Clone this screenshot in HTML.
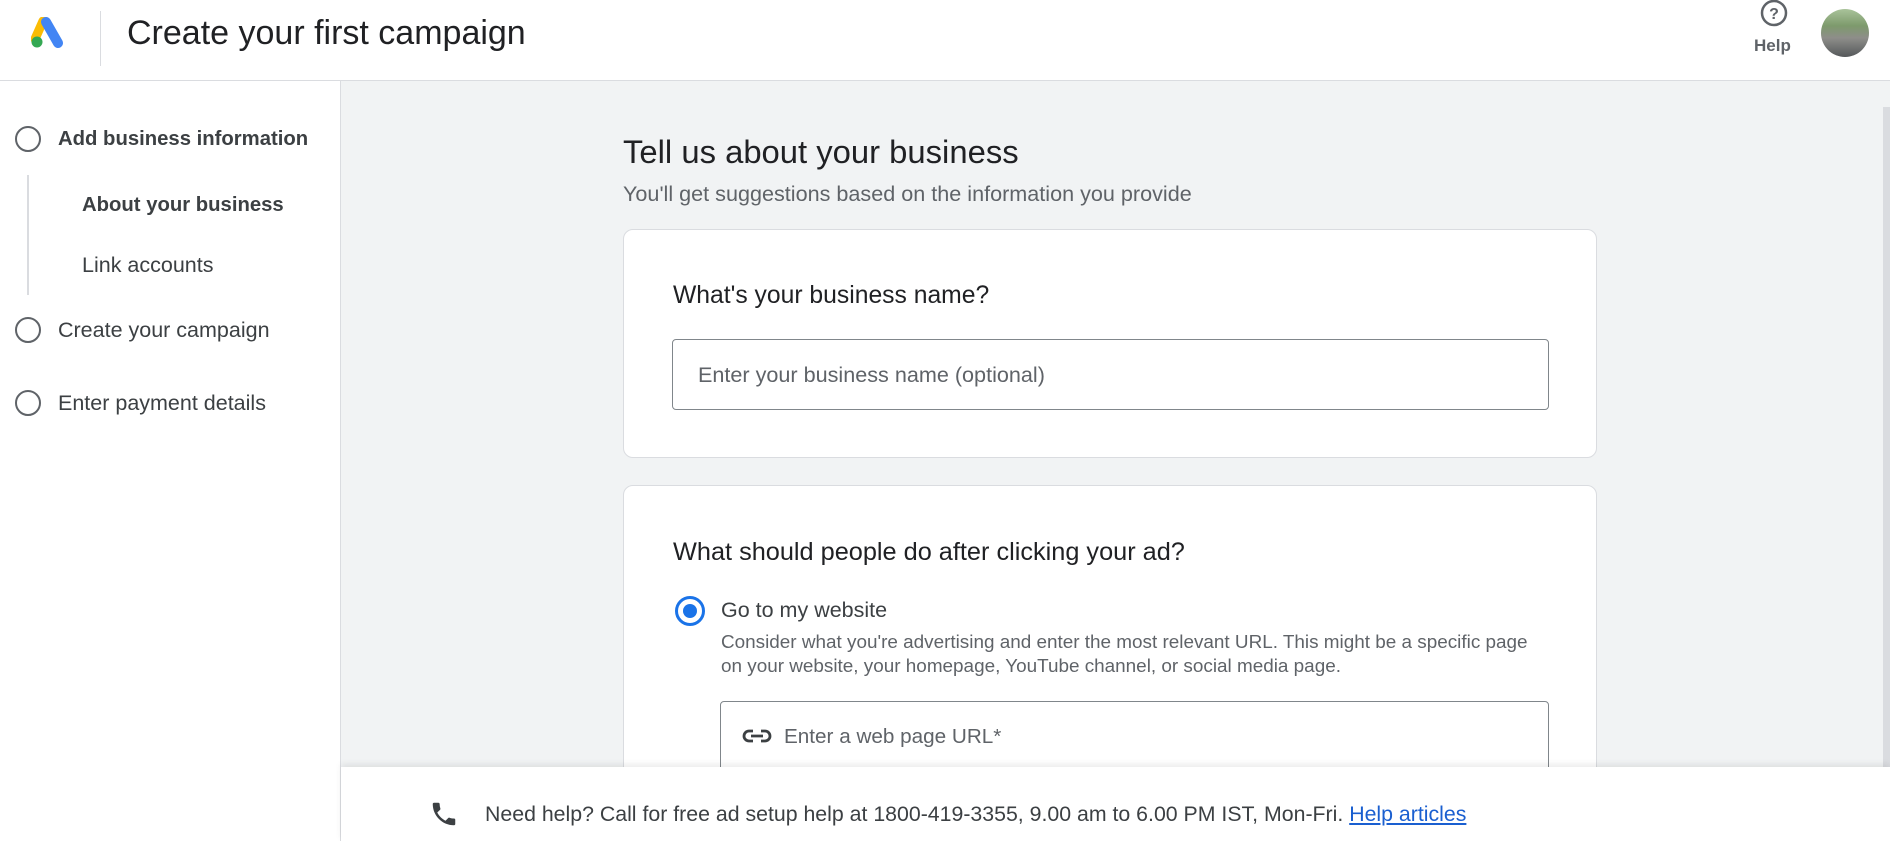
<!DOCTYPE html>
<html><head><style>
*{margin:0;padding:0;box-sizing:border-box}
html,body{width:1890px;height:841px;overflow:hidden}
body{font-family:"Liberation Sans",Roboto,sans-serif;background:#f1f3f4;position:relative;color:#3c4043}
.hdr{position:absolute;left:0;top:0;width:1890px;height:81px;background:#fff;border-bottom:1px solid #dadce0}
.side{position:absolute;left:0;top:81px;width:341px;height:760px;background:#fff;border-right:1px solid #dadce0}
.abs{position:absolute;white-space:nowrap}
.circ{position:absolute;width:26px;height:26px;border:2.5px solid #5f6368;border-radius:50%}
.card{position:absolute;background:#fff;border:1px solid #dadce0;border-radius:10px;overflow:hidden}
.inp{position:absolute;border:1px solid #80868b;border-radius:4px;background:#fff}
</style></head><body>
<div class="hdr">
<svg class="abs" style="left:31px;top:17px" width="34" height="32" viewBox="0 0 34 32">
<path d="M12 4 L4 22" stroke="#fbbc04" stroke-width="9" stroke-linecap="round"/>
<path d="M15 5 L27 26" stroke="#4285f4" stroke-width="10" stroke-linecap="round"/>
<circle cx="6" cy="25" r="5.5" fill="#34a853"/>
</svg>
<div class="abs" style="left:100px;top:11px;width:1px;height:55px;background:#dadce0"></div>
<div class="abs" style="left:127px;top:14px;font-size:34px;color:#202124">Create your first campaign</div>
<svg class="abs" style="left:1760px;top:0px" width="28" height="28" viewBox="0 0 28 28"><circle cx="14" cy="13" r="12" fill="none" stroke="#5f6368" stroke-width="2.5"/><text x="14" y="19" font-size="16" font-weight="bold" text-anchor="middle" fill="#5f6368" font-family="Liberation Sans">?</text></svg>
<div class="abs" style="left:1754px;top:36px;font-size:17px;font-weight:bold;color:#5f6368">Help</div>
<div class="abs" style="left:1821px;top:9px;width:48px;height:48px;border-radius:50%;background:linear-gradient(180deg,#a9c39a 0%,#7d9a6c 35%,#8e8e8a 60%,#55585a 100%)"></div>
</div>
<div class="side">
<div class="circ" style="left:15px;top:45px"></div>
<div class="abs" style="left:58px;top:47px;font-size:20.3px;font-weight:bold;color:#3c4043">Add business information</div>
<div class="abs" style="left:27px;top:94px;width:1.5px;height:120px;background:#dadce0"></div>
<div class="abs" style="left:82px;top:113px;font-size:20.3px;font-weight:bold;color:#3c4043">About your business</div>
<div class="abs" style="left:82px;top:172px;font-size:21.5px;color:#3c4043">Link accounts</div>
<div class="circ" style="left:15px;top:236px"></div>
<div class="abs" style="left:58px;top:237px;font-size:21.5px;color:#3c4043">Create your campaign</div>
<div class="circ" style="left:15px;top:309px"></div>
<div class="abs" style="left:58px;top:310px;font-size:21.5px;color:#3c4043">Enter payment details</div>
</div>
<div class="abs" style="left:623px;top:133px;font-size:32.8px;color:#202124">Tell us about your business</div>
<div class="abs" style="left:623px;top:181px;font-size:21.6px;color:#5f6368">You'll get suggestions based on the information you provide</div>
<div class="card" style="left:623px;top:229px;width:974px;height:229px">
<div class="abs" style="left:49px;top:52px;font-size:24.7px;color:#202124">What's your business name?</div>
<div class="inp" style="left:48px;top:109px;width:877px;height:71px"><div class="abs" style="left:25px;top:22px;font-size:21.6px;color:#5f6368">Enter your business name (optional)</div></div>
</div>
<div class="card" style="left:623px;top:485px;width:974px;height:380px">
<div class="abs" style="left:49px;top:52px;font-size:25.3px;color:#202124">What should people do after clicking your ad?</div>
<div class="abs" style="left:51px;top:110px;width:30px;height:30px;border:3px solid #1a73e8;border-radius:50%"><div style="position:absolute;left:5px;top:5px;width:14px;height:14px;border-radius:50%;background:#1a73e8"></div></div>
<div class="abs" style="left:97px;top:112px;font-size:21.5px;color:#3c4043">Go to my website</div>
<div class="abs" style="left:97px;top:145px;font-size:18.9px;line-height:24px;color:#5f6368">Consider what you're advertising and enter the most relevant URL. This might be a specific page<br>on your website, your homepage, YouTube channel, or social media page.</div>
<div class="inp" style="left:96px;top:215px;width:829px;height:90px">
<svg class="abs" style="left:20px;top:26px" width="32" height="16" viewBox="0 0 32 16"><path d="M12 3H8a5 5 0 0 0 0 10h4M20 3h4a5 5 0 0 1 0 10h-4M10 8h12" fill="none" stroke="#3c4043" stroke-width="2.8"/></svg>
<div class="abs" style="left:63px;top:23px;font-size:20.7px;color:#5f6368">Enter a web page URL*</div>
</div>
</div>
<div class="abs" style="left:1883px;top:107px;width:7px;height:660px;background:#dadce0"></div>
<div class="abs" style="left:341px;top:767px;width:1549px;height:74px;background:#fff;box-shadow:0 -3px 6px rgba(0,0,0,0.08)">
<svg class="abs" style="left:88px;top:32px" width="30" height="30" viewBox="0 0 24 24"><path d="M6.6 10.8c1.4 2.8 3.8 5.1 6.6 6.6l2.2-2.2c.3-.3.7-.4 1-.2 1.1.4 2.3.6 3.6.6.6 0 1 .4 1 1V20c0 .6-.4 1-1 1C10.6 21 3 13.4 3 4c0-.6.4-1 1-1h3.5c.6 0 1 .4 1 1 0 1.2.2 2.4.6 3.6.1.3 0 .7-.2 1z" fill="#3c4043"/></svg>
<div class="abs" style="left:144px;top:35px;font-size:21.3px;color:#3c4043">Need help? Call for free ad setup help at 1800-419-3355, 9.00 am to 6.00 PM IST, Mon-Fri. <span style="color:#1a5fd0;text-decoration:underline">Help articles</span></div>
</div>
</body></html>
